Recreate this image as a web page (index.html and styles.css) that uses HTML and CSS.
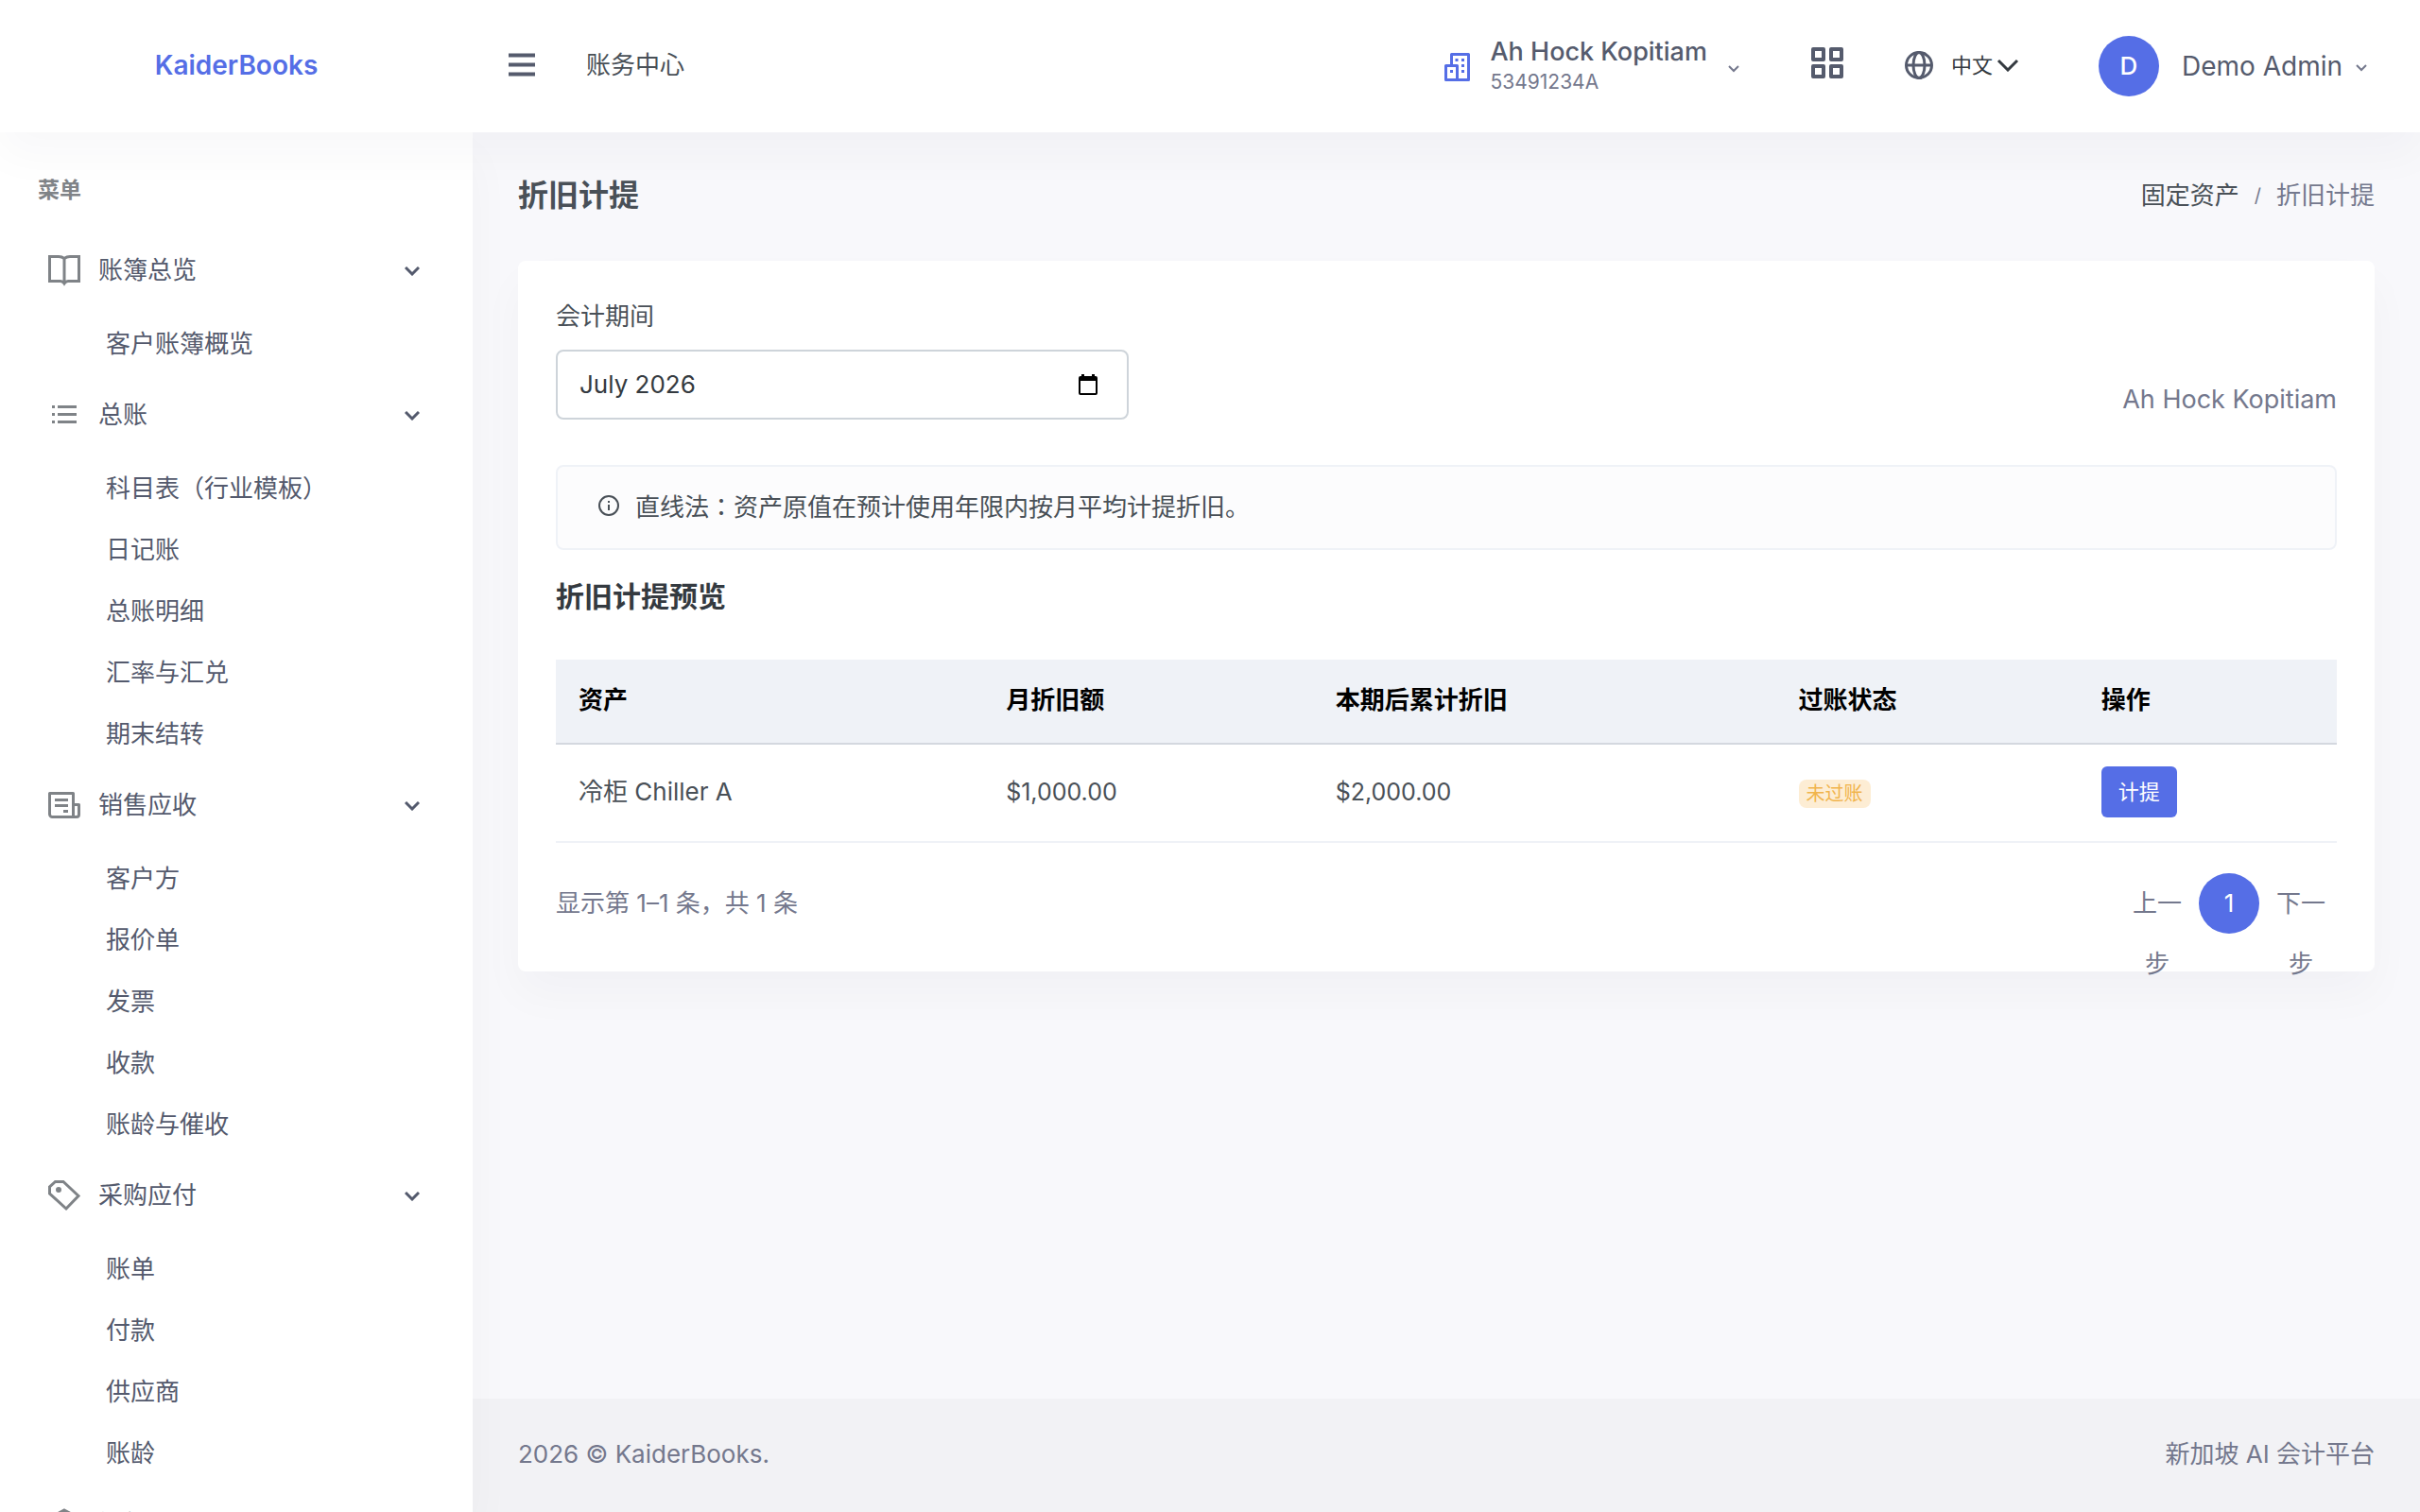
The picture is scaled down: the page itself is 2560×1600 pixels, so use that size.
FILE: index.html
```html
<!DOCTYPE html>
<html lang="en">
<head>
<meta charset="utf-8">
<title>折旧计提 | KaiderBooks</title>
<meta name="viewport" content="width=device-width, initial-scale=1">
<link rel="stylesheet" href="styles.css">
</head>
<body>
<header class="topbar">
  <a class="brand" href="#">KaiderBooks</a>
  <div class="topbar-left">
    <button class="icon-btn menu-btn" type="button" aria-label="切换菜单">
      <svg width="30" height="26" viewBox="0 0 30 26"><path d="M0 2.500h28M0 12.500h28M0 22.500h28" fill="none" stroke="currentColor" stroke-width="4"/></svg>
    </button>
    <a class="hub-link" href="#">账务中心</a>
  </div>
  <div class="topbar-right">
    <button class="company" type="button">
      <svg class="company-icon" width="28" height="30" viewBox="0 0 28 30" fill="none" stroke="currentColor" stroke-width="3" stroke-linejoin="round"><path d="M7.500 13V1.500H25.500V28.500H1.500V13.500H13.500V28"/><path d="M11.500 7.500h3M18 7.500h3M18 13.500h3M18 19.500h3M6 19.500h3"/></svg>
      <span class="company-text"><span class="company-name">Ah Hock Kopitiam</span><span class="company-id">53491234A</span></span>
      <svg class="chev-sm" width="12" height="8" viewBox="0 0 12 8"><path d="M1 1l5 5 5-5" fill="none" stroke="currentColor" stroke-width="2"/></svg>
    </button>
    <button class="icon-btn apps-btn" type="button" aria-label="应用">
      <svg width="34" height="34" viewBox="0 0 34 34" fill="none" stroke="currentColor" stroke-width="4" stroke-linejoin="round"><rect x="2" y="2" width="11" height="11"/><rect x="21" y="2" width="11" height="11"/><rect x="2" y="20" width="11" height="11"/><rect x="21" y="20" width="11" height="11"/></svg>
    </button>
    <button class="lang" type="button">
      <svg width="32" height="32" viewBox="0 0 32 32" fill="none" stroke="currentColor" stroke-width="3"><circle cx="16" cy="16" r="13.500"/><ellipse cx="16" cy="16" rx="6" ry="13.500"/><path d="M2 16h28"/></svg>
      <span class="lang-text">中文<svg width="24" height="14" viewBox="0 0 24 14"><path d="M2 2l10 10L22 2" fill="none" stroke="currentColor" stroke-width="3"/></svg></span>
    </button>
    <button class="user" type="button">
      <span class="avatar">D</span>
      <span class="user-name">Demo Admin</span>
      <svg class="chev-sm" width="12" height="8" viewBox="0 0 12 8"><path d="M1 1l5 5 5-5" fill="none" stroke="currentColor" stroke-width="2"/></svg>
    </button>
  </div>
</header>
<div class="shell">
  <nav class="sidebar" aria-label="菜单">
    <p class="menu-title">菜单</p>
    <button class="group" type="button">
      <svg class="group-icon" viewBox="0 0 36 36" fill="none" stroke="currentColor" stroke-width="3"><path d="M18 5.500C16 4 14 3.500 12 3.500H2.500V29.500H14C16 29.500 17 30.500 18 32C19 30.500 20 29.500 22 29.500H33.500V3.500H24C22 3.500 20 4 18 5.500V31"/></svg>
      <span>账簿总览</span><svg class="chev" viewBox="0 0 16 10"><path d="M1 1l7 7 7-7" fill="none" stroke="currentColor" stroke-width="3"/></svg>
    </button>
    <ul class="sub"><li><a href="#">客户账簿概览</a></li></ul>
    <button class="group" type="button">
      <svg class="group-icon" viewBox="0 0 36 36" fill="none" stroke="currentColor" stroke-width="3"><path d="M5 9.500h3M11 9.500h20M5 17.500h3M11 17.500h20M5 25.500h3M11 25.500h20"/></svg>
      <span>总账</span><svg class="chev" viewBox="0 0 16 10"><path d="M1 1l7 7 7-7" fill="none" stroke="currentColor" stroke-width="3"/></svg>
    </button>
    <ul class="sub">
      <li><a href="#">科目表（行业模板）</a></li><li><a href="#">日记账</a></li><li><a href="#">总账明细</a></li><li><a href="#">汇率与汇兑</a></li><li><a href="#">期末结转</a></li>
    </ul>
    <button class="group" type="button">
      <svg class="group-icon" viewBox="0 0 36 36" fill="none" stroke="currentColor" stroke-width="3" stroke-linejoin="round"><path d="M27.500 30.500H5.500A3 3 0 0 1 2.500 27.500V5.500H27.500V30.500H31A2.500 2.500 0 0 0 33.500 28V17.500H27.500M8 12.500h14M8 18.500h14M17 24.500h5"/></svg>
      <span>销售应收</span><svg class="chev" viewBox="0 0 16 10"><path d="M1 1l7 7 7-7" fill="none" stroke="currentColor" stroke-width="3"/></svg>
    </button>
    <ul class="sub">
      <li><a href="#">客户方</a></li><li><a href="#">报价单</a></li><li><a href="#">发票</a></li><li><a href="#">收款</a></li><li><a href="#">账龄与催收</a></li>
    </ul>
    <button class="group" type="button">
      <svg class="group-icon" viewBox="0 0 36 36" fill="none" stroke="currentColor" stroke-width="3"><path d="M8.500 3.500H17L33 18.500L20 32L2.500 16V9Z"/><circle cx="12" cy="12" r="1.500"/></svg>
      <span>采购应付</span><svg class="chev" viewBox="0 0 16 10"><path d="M1 1l7 7 7-7" fill="none" stroke="currentColor" stroke-width="3"/></svg>
    </button>
    <ul class="sub">
      <li><a href="#">账单</a></li><li><a href="#">付款</a></li><li><a href="#">供应商</a></li><li><a href="#">账龄</a></li>
    </ul>
    <button class="group" type="button">
      <svg class="group-icon" viewBox="0 0 36 36" fill="none" stroke="currentColor" stroke-width="3"><path d="M18 3L31 10V25L18 33L5 25V10Z"/></svg>
      <span>银行</span><svg class="chev" viewBox="0 0 16 10"><path d="M1 1l7 7 7-7" fill="none" stroke="currentColor" stroke-width="3"/></svg>
    </button>
  </nav>
  <div class="content">
    <main class="page">
      <div class="page-head">
        <h1>折旧计提</h1>
        <nav class="crumbs" aria-label="路径"><a href="#">固定资产</a><span class="slash">/</span><span>折旧计提</span></nav>
      </div>
      <section class="card">
        <div class="filters">
          <div class="field">
            <label for="period">会计期间</label>
            <div class="month-box">
              <input id="period" type="text" value="July 2026">
              <button type="button" aria-label="选择月份"><svg width="20" height="22" viewBox="0 0 20 22"><path d="M3 0h3v2h8V0h3v2h1a2 2 0 0 1 2 2v16a2 2 0 0 1-2 2H2a2 2 0 0 1-2-2V4a2 2 0 0 1 2-2h1zM2 7v13h16V7z" fill="#000" fill-rule="evenodd"/></svg></button>
            </div>
          </div>
          <p class="company-label">Ah Hock Kopitiam</p>
        </div>
        <div class="note">
          <svg width="24" height="24" viewBox="0 0 24 24" fill="none" stroke="currentColor" stroke-width="2"><circle cx="12" cy="12" r="10"/><path d="M12 11v6M12 7v2"/></svg>
          <span>直线法：资产原值在预计使用年限内按月平均计提折旧。</span>
        </div>
        <h2>折旧计提预览</h2>
        <table>
          <colgroup><col class="c1"><col class="c2"><col class="c3"><col class="c4"><col class="c5"></colgroup>
          <thead><tr><th>资产</th><th>月折旧额</th><th>本期后累计折旧</th><th>过账状态</th><th>操作</th></tr></thead>
          <tbody><tr><td>冷柜 Chiller A</td><td class="amount">$1,000.00</td><td class="amount">$2,000.00</td><td><span class="badge">未过账</span></td><td><button class="post-btn" type="button">计提</button></td></tr></tbody>
        </table>
        <div class="table-foot">
          <p>显示第 1–1 条，共 1 条</p>
          <div class="pager"><a href="#">上一步</a><a class="current" href="#" aria-current="page">1</a><a href="#">下一步</a></div>
        </div>
      </section>
    </main>
    <footer class="footer"><span>2026 © KaiderBooks.</span><span>新加坡 AI 会计平台</span></footer>
  </div>
</div>
</body>
</html>
```

FILE: styles.css
```css
* { box-sizing: border-box; }
body {
  margin: 0;
  height: 100vh;
  display: flex;
  flex-direction: column;
  overflow: hidden;
  background: #f8f8fb;
  color: #495057;
  font: 26px/38px Inter, "Noto Sans CJK JP", sans-serif;
}
button { font: inherit; color: inherit; background: none; border: 0; padding: 0; text-align: left; }
a { color: inherit; text-decoration: none; }
h1, h2, p, ul { margin: 0; padding: 0; }
svg { display: block; flex: none; }

.topbar {
  position: relative;
  z-index: 2;
  flex: none;
  display: flex;
  align-items: center;
  height: 140px;
  padding: 0 56px 2px 0;
  background: #fff;
  color: #555b6d;
  box-shadow: 0 24px 48px rgba(18, 38, 63, 0.03);
}
.brand { width: 500px; text-align: center; color: #556ee6; font-size: 28px; font-weight: 600; }
.topbar-left { display: flex; align-items: center; gap: 52px; padding: 0 38px; }
.hub-link { color: #495057; }
.topbar-right { display: flex; align-items: center; margin-left: auto; }
.company { display: flex; align-items: center; padding-top: 3px; }
.company-text { display: flex; flex-direction: column; margin: 0 22px 0 20px; line-height: 32px; }
.company-name { font-size: 27px; font-weight: 500; }
.company-id { font-size: 21px; color: #74788d; }
.company-icon { color: #556ee6; }
.chev-sm { margin-top: 4px; color: #74788d; }
.apps-btn { margin: 0 64px 4px 76px; }
.lang { display: flex; align-items: center; gap: 18px; margin-right: 84px; }
.lang-text { display: flex; align-items: center; gap: 4px; font-size: 22px; color: #343a40; }
.user { display: flex; align-items: center; padding-top: 2px; }
.avatar { width: 64px; height: 64px; border-radius: 50%; background: #556ee6; color: #fff; font-weight: 500; line-height: 64px; text-align: center; }
.user-name { margin: 0 14px 0 24px; font-size: 28px; }

.shell { flex: 1; min-height: 0; display: flex; }
.sidebar { flex: none; width: 500px; overflow: hidden; background: #fff; color: #545a6d; box-shadow: 0 24px 48px rgba(18, 38, 63, 0.03); position: relative; z-index: 1; }
.menu-title { padding: 43px 40px 28px; font-size: 23px; line-height: 36px; font-weight: 600; color: #7f8387; }
.group { display: flex; align-items: center; gap: 18px; width: 100%; height: 78px; padding: 0 56px 0 50px; }
.group-icon { width: 36px; height: 36px; color: #7f8387; }
.chev { width: 16px; height: 10px; margin: 2px 0 0 auto; }
.sub { list-style: none; padding: 6px 0 4px 112px; line-height: 40px; }
.sub li { height: 65px; padding-top: 13px; }

.content { flex: 1; min-width: 0; display: flex; flex-direction: column; }
.page { flex: 1; padding: 48px 48px 0; }
.page-head { display: flex; align-items: center; justify-content: space-between; height: 38px; margin-bottom: 50px; }
h1 { font-size: 32px; line-height: 40px; font-weight: 600; }
.crumbs { display: flex; align-items: center; gap: 16px; color: #74788d; }
.crumbs a { color: #495057; }
.slash { font-size: 20px; }
.card { padding: 40px; background: #fff; border-radius: 8px; box-shadow: 0 24px 48px rgba(18, 38, 63, 0.03); }
.filters { display: flex; align-items: flex-end; justify-content: space-between; margin-bottom: 48px; }
.field { width: 606px; display: flex; flex-direction: column; gap: 16px; }
.month-box { display: flex; align-items: center; height: 74px; padding: 0 31px 0 23px; border: 2px solid #ced4da; border-radius: 8px; background: #fff; }
.month-box input { flex: 1; min-width: 0; padding: 0; border: 0; outline: 0; background: none; color: #343a40; font: inherit; }
.company-label { font-size: 27px; padding-bottom: 2px; color: #74788d; }
.note { display: flex; align-items: center; gap: 16px; height: 90px; padding: 0 42px; margin-bottom: 30px; border: 2px solid #eff2f7; border-radius: 8px; background: #fcfcfd; }
.note svg { margin-bottom: 4px; }
h2 { font-size: 30px; line-height: 38px; font-weight: 600; color: #343a40; margin-bottom: 48px; }
table { width: 100%; border-collapse: collapse; table-layout: fixed; }
.c1 { width: 24%; } .c2 { width: 18.5%; } .c3 { width: 26%; } .c4 { width: 17%; } .c5 { width: 14.5%; }
th, td { padding: 22px 24px 24px; text-align: left; }
th { height: 89px; background: #eff2f7; color: #000; font-weight: 600; border-bottom: 2px solid #d4d8df; }
td { height: 104px; border-bottom: 2px solid #eff2f7; }
.amount { font-size: 25px; }
.badge { display: inline-block; padding: 0 8px; border-radius: 8px; background: #fdedd4; color: #f1b44c; font-size: 20px; line-height: 30px; }
.post-btn { height: 54px; padding: 0 18px; border-radius: 6px; background: #556ee6; color: #fff; font-size: 22px; }
.table-foot { display: flex; justify-content: space-between; margin-top: 32px; padding-right: 6px; line-height: 64px; color: #74788d; }
.pager { display: flex; gap: 12px; height: 64px; }
.pager a { width: 64px; text-align: center; }
.pager .current { border-radius: 50%; background: #556ee6; color: #fff; }
.footer { flex: none; display: flex; align-items: center; justify-content: space-between; height: 120px; padding: 0 48px 2px; background: #f2f2f5; color: #74788d; }
```
